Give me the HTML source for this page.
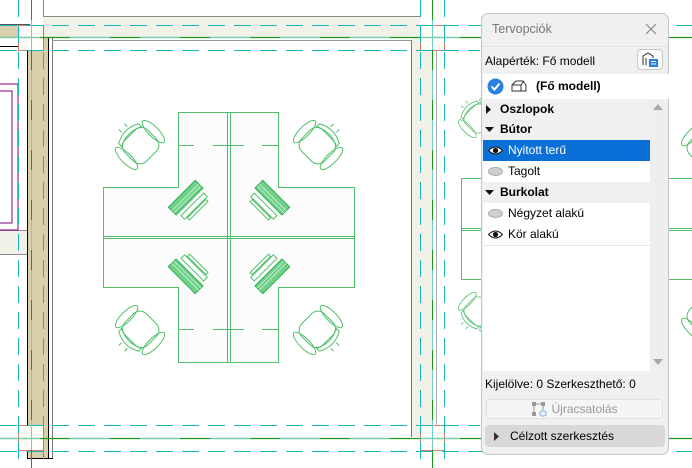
<!DOCTYPE html>
<html><head><meta charset="utf-8"><style>
html,body{margin:0;padding:0;width:692px;height:468px;overflow:hidden;background:#fff;font-family:"Liberation Sans","DejaVu Sans",sans-serif;}
#p{position:absolute;left:481px;top:13px;width:188px;height:442px;background:#f0f0f0;border:1px solid #c6c6c6;border-radius:7px;box-sizing:border-box;font-size:12px;color:#000;}
.row{position:absolute;left:1px;width:167px;height:21px;line-height:21px;}
.eye{position:absolute;left:5px;top:6px;width:15px;height:9px;}
</style></head><body>
<svg width="692" height="468" style="position:absolute;left:0;top:0">
<defs>
<g id="chair" fill="none" stroke="#4fbf6a" stroke-width="1">
 <rect x="-16" y="-14" width="32" height="30" rx="9"/>
 <ellipse cx="-19" cy="0" rx="5" ry="15"/>
 <ellipse cx="19" cy="0" rx="5" ry="15"/>
 <path d="M-14 -16 Q0 -24 14 -16 L14 -12 Q0 -19 -14 -12Z"/>
 <path d="M-4 -22 v-4 M4 -22 v-4"/>
</g>
<g id="kb">
 <rect x="-19" y="-6" width="38" height="11" fill="#6fd08a" stroke="#2fae50" stroke-width="1"/>
 <path d="M-19 -1 h38 M-19 2 h38" stroke="#e8fbe8" stroke-width="0.6"/>
 <rect x="-16" y="9" width="32" height="5" fill="none" stroke="#4fbf6a"/>
 <rect x="-13" y="15" width="26" height="3" fill="none" stroke="#4fbf6a"/>
</g>
</defs>
<!-- left wall -->
<rect x="0" y="25" width="18" height="12" fill="#d8cfac"/>
<rect x="0" y="24" width="30" height="1" fill="#555"/>
<rect x="0" y="46" width="30" height="1" fill="#000"/>
<rect x="27" y="37" width="21" height="422" fill="#d8cfac"/>
<rect x="27" y="46" width="1" height="413" fill="#000"/>
<rect x="48" y="37" width="1" height="422" fill="#000"/>
<rect x="52" y="37" width="1" height="422" fill="#777"/>
<rect x="27" y="458" width="26" height="1" fill="#000"/>
<rect x="0" y="230" width="27" height="25" fill="#f2f1e8"/>
<rect x="0" y="230" width="27" height="1" fill="#888"/><rect x="0" y="254" width="27" height="1" fill="#888"/>
<rect x="-2" y="84" width="20" height="146" fill="none" stroke="#800080" stroke-width="1"/>
<rect x="-2" y="91" width="14" height="132" fill="none" stroke="#800080" stroke-width="1"/>
<!-- top wall -->
<rect x="43" y="16" width="377" height="21" fill="#f2f1e8"/>
<rect x="43" y="16" width="377" height="1" fill="#888"/>
<rect x="52" y="40" width="360" height="1" fill="#999"/>
<!-- right wall -->
<rect x="412" y="37" width="20" height="400" fill="#f2f1e8"/>
<rect x="411" y="40" width="1" height="397" fill="#777"/>
<rect x="436" y="40" width="1" height="390" fill="#aaa"/>
<!-- corners -->
<rect x="18.5" y="25.5" width="25" height="25" fill="#fffdf5" stroke="#d08070"/>
<rect x="420.5" y="25.5" width="24" height="25" fill="#fffdf5" stroke="#d08070"/>
<rect x="18.5" y="425.5" width="25" height="25" fill="#fffdf5" stroke="#d08070"/>
<rect x="420.5" y="425.5" width="24" height="25" fill="#fffdf5" stroke="#d08070"/>
<!-- grid lines -->
<g stroke="#18b8b8" stroke-width="1" stroke-dasharray="17,9">
 <path d="M0 25.5H692 M0 50.5H480 M0 425.5H480 M0 451.5H692"/>
 <path d="M18.5 0V468 M43.5 0V468 M420.5 0V468 M444.5 0V468"/>
</g>
<path d="M0 37.5H692 M0 438.5H692" stroke="#1a9a1a" stroke-width="1.2"/>
<path d="M0 37.5H480 M0 438.5H480" stroke="#6fd0c8" stroke-width="1" stroke-dasharray="40,30"/>
<path d="M31.5 0V468 M432.5 0V468" stroke="#6fd0c8" stroke-width="1"/>
<path d="M31.5 0V468 M432.5 0V468" stroke="#1a9a1a" stroke-width="1" stroke-dasharray="20,30"/>
<!-- desks -->
<g fill="#fcfcfc" stroke="#4fbf6a" stroke-width="1">
<path d="M178.5 112.5H278.5V187.5H354.5V287.5H278.5V362.5H178.5V287.5H103.5V187.5H178.5Z"/>
</g>
<g stroke="#4fbf6a" fill="none">
<path d="M227.5 112V362 M230.5 112V362 M103 236.5H355 M103 238.5H355"/>
<path d="M179 145.5h15 M213 145.5h31 M262 145.5h16 M179 329.5h15 M213 329.5h31 M262 329.5h16"/>
<path d="M461.5 178.5H692 M461.5 228.5H692 M461.5 230.5H692 M461.5 279.5H692 M461.5 178V280"/>
</g>
<use href="#chair" transform="translate(140,145) rotate(-45)"/>
<use href="#chair" transform="translate(318,145) rotate(45)"/>
<use href="#chair" transform="translate(140,330) rotate(-135)"/>
<use href="#chair" transform="translate(318,330) rotate(135)"/>
<use href="#chair" transform="translate(706,148) rotate(45)"/>
<use href="#chair" transform="translate(706,316) rotate(135)"/>
<use href="#chair" transform="translate(478,118) rotate(-45) scale(0.8)"/>
<use href="#chair" transform="translate(478,312) rotate(-135) scale(0.8)"/>
<use href="#kb" transform="translate(186,198) rotate(-45)"/>
<use href="#kb" transform="translate(272,198) rotate(45) scale(-1,1)"/>
<use href="#kb" transform="translate(186,276) rotate(-135) scale(-1,1)"/>
<use href="#kb" transform="translate(272,276) rotate(135)"/>
</svg>

<div id="p">
 <div style="position:absolute;left:10px;top:8px;color:#777;font-size:12.5px">Tervopciók</div>
 <svg style="position:absolute;left:163px;top:9px" width="12" height="12"><path d="M1 1L11 11M11 1L1 11" stroke="#888" stroke-width="1.2"/></svg>
 <div style="position:absolute;left:0;top:32px;width:186px;height:1px;background:#e2e2e2"></div>
 <div style="position:absolute;left:3px;top:40px;">Alapérték: Fő modell</div>
 <div style="position:absolute;left:155px;top:35px;width:26px;height:21px;border:1px solid #c8c8c8;border-radius:4px;background:#fafafa;box-sizing:border-box">
  <svg width="24" height="19"><path d="M5 15V6l5-3 5 3v2M8 15V8" stroke="#333" fill="none"/><rect x="11" y="9" width="9" height="8" fill="#2a7fe0"/><path d="M13 11.5h5M13 14h5" stroke="#fff"/></svg>
 </div>
 <div style="position:absolute;left:1px;top:60px;width:186px;height:25px;background:#fff">
  <svg style="position:absolute;left:4px;top:4px" width="17" height="17"><circle cx="8.5" cy="8.5" r="8" fill="#2a7fe0"/><path d="M4.5 8.5l3 3 5-6" stroke="#fff" stroke-width="2" fill="none"/></svg>
  <svg style="position:absolute;left:28px;top:6px" width="16" height="12"><path d="M1 11V5l4-4h7l3 4v6ZM1 5h9l3-4M10 5v6" stroke="#333" fill="none"/></svg>
  <b style="position:absolute;left:53px;top:5px">(Fő modell)</b>
 </div>
 <div style="position:absolute;left:1px;top:85px;width:167px;height:272px;background:#fff"></div>
 <div style="position:absolute;left:168px;top:85px;width:14px;height:272px;background:#eeeeee"></div>
 <svg style="position:absolute;left:170px;top:89px" width="12" height="8"><path d="M1 7L6 1L11 7Z" fill="#aaa"/></svg>
 <svg style="position:absolute;left:170px;top:344px" width="12" height="8"><path d="M1 1L6 7L11 1Z" fill="#aaa"/></svg>
 <div class="row" style="top:85px;background:#f0f0f0"><svg style="position:absolute;left:3px;top:6px" width="6" height="9"><path d="M0 0L5 4.5L0 9Z" fill="#111"/></svg><b style="position:absolute;left:17px">Oszlopok</b></div>
 <div class="row" style="top:105px;background:#f0f0f0"><svg style="position:absolute;left:2px;top:8px" width="9" height="6"><path d="M0 0H9L4.5 5Z" fill="#111"/></svg><b style="position:absolute;left:17px">Bútor</b></div>
 <div class="row" style="top:126px;background:#0a6fd6;color:#fff"><svg class="eye" viewBox="0 0 15 9"><path d="M0.5 4.5Q7.5 -2.5 14.5 4.5Q7.5 11.5 0.5 4.5Z" fill="#fff" stroke="#111"/><circle cx="7.5" cy="4.5" r="2.6" fill="#111"/></svg><span style="position:absolute;left:25px">Nyitott terű</span></div>
 <div class="row" style="top:147px;background:#fff"><svg class="eye" viewBox="0 0 15 9"><ellipse cx="7.5" cy="4.5" rx="7" ry="4" fill="#d0d0d0" stroke="#aaa"/></svg><span style="position:absolute;left:25px">Tagolt</span></div>
 <div class="row" style="top:168px;background:#f0f0f0"><svg style="position:absolute;left:2px;top:8px" width="9" height="6"><path d="M0 0H9L4.5 5Z" fill="#111"/></svg><b style="position:absolute;left:17px">Burkolat</b></div>
 <div class="row" style="top:189px;background:#fff;border-bottom:1px solid #e6e6e6"><svg class="eye" viewBox="0 0 15 9"><ellipse cx="7.5" cy="4.5" rx="7" ry="4" fill="#d0d0d0" stroke="#aaa"/></svg><span style="position:absolute;left:25px">Négyzet alakú</span></div>
 <div class="row" style="top:210px;background:#fff;border-bottom:1px solid #e6e6e6"><svg class="eye" viewBox="0 0 15 9"><path d="M0.5 4.5Q7.5 -2.5 14.5 4.5Q7.5 11.5 0.5 4.5Z" fill="#fff" stroke="#111"/><circle cx="7.5" cy="4.5" r="2.6" fill="#111"/></svg><span style="position:absolute;left:25px">Kör alakú</span></div>
 <div style="position:absolute;left:3px;top:363px;">Kijelölve: 0 Szerkeszthető: 0</div>
 <div style="position:absolute;left:4px;top:385px;width:177px;height:20px;border:1px solid #e0e0e0;border-radius:4px;background:#f5f5f5;box-sizing:border-box;color:#999;text-align:center;line-height:18px"><svg style="vertical-align:-4px;margin-right:4px" width="16" height="16"><path d="M3 3h9M3 3v9M12 3v6" stroke="#999" fill="none"/><rect x="1" y="1" width="4" height="4" fill="#999"/><rect x="10" y="1" width="4" height="4" fill="#999"/><rect x="1" y="11" width="4" height="4" fill="#999"/><rect x="9" y="10" width="6" height="5" rx="2" fill="none" stroke="#7aaee8"/></svg>Újracsatolás</div>
 <div style="position:absolute;left:3px;top:411px;width:180px;height:22px;background:#d8d8d8;border-radius:4px"><svg style="position:absolute;left:9px;top:7px" width="6" height="9"><path d="M0 0L5 4.5L0 9Z" fill="#333"/></svg><span style="position:absolute;left:25px;top:4px">Célzott szerkesztés</span></div>
</div>
</body></html>
